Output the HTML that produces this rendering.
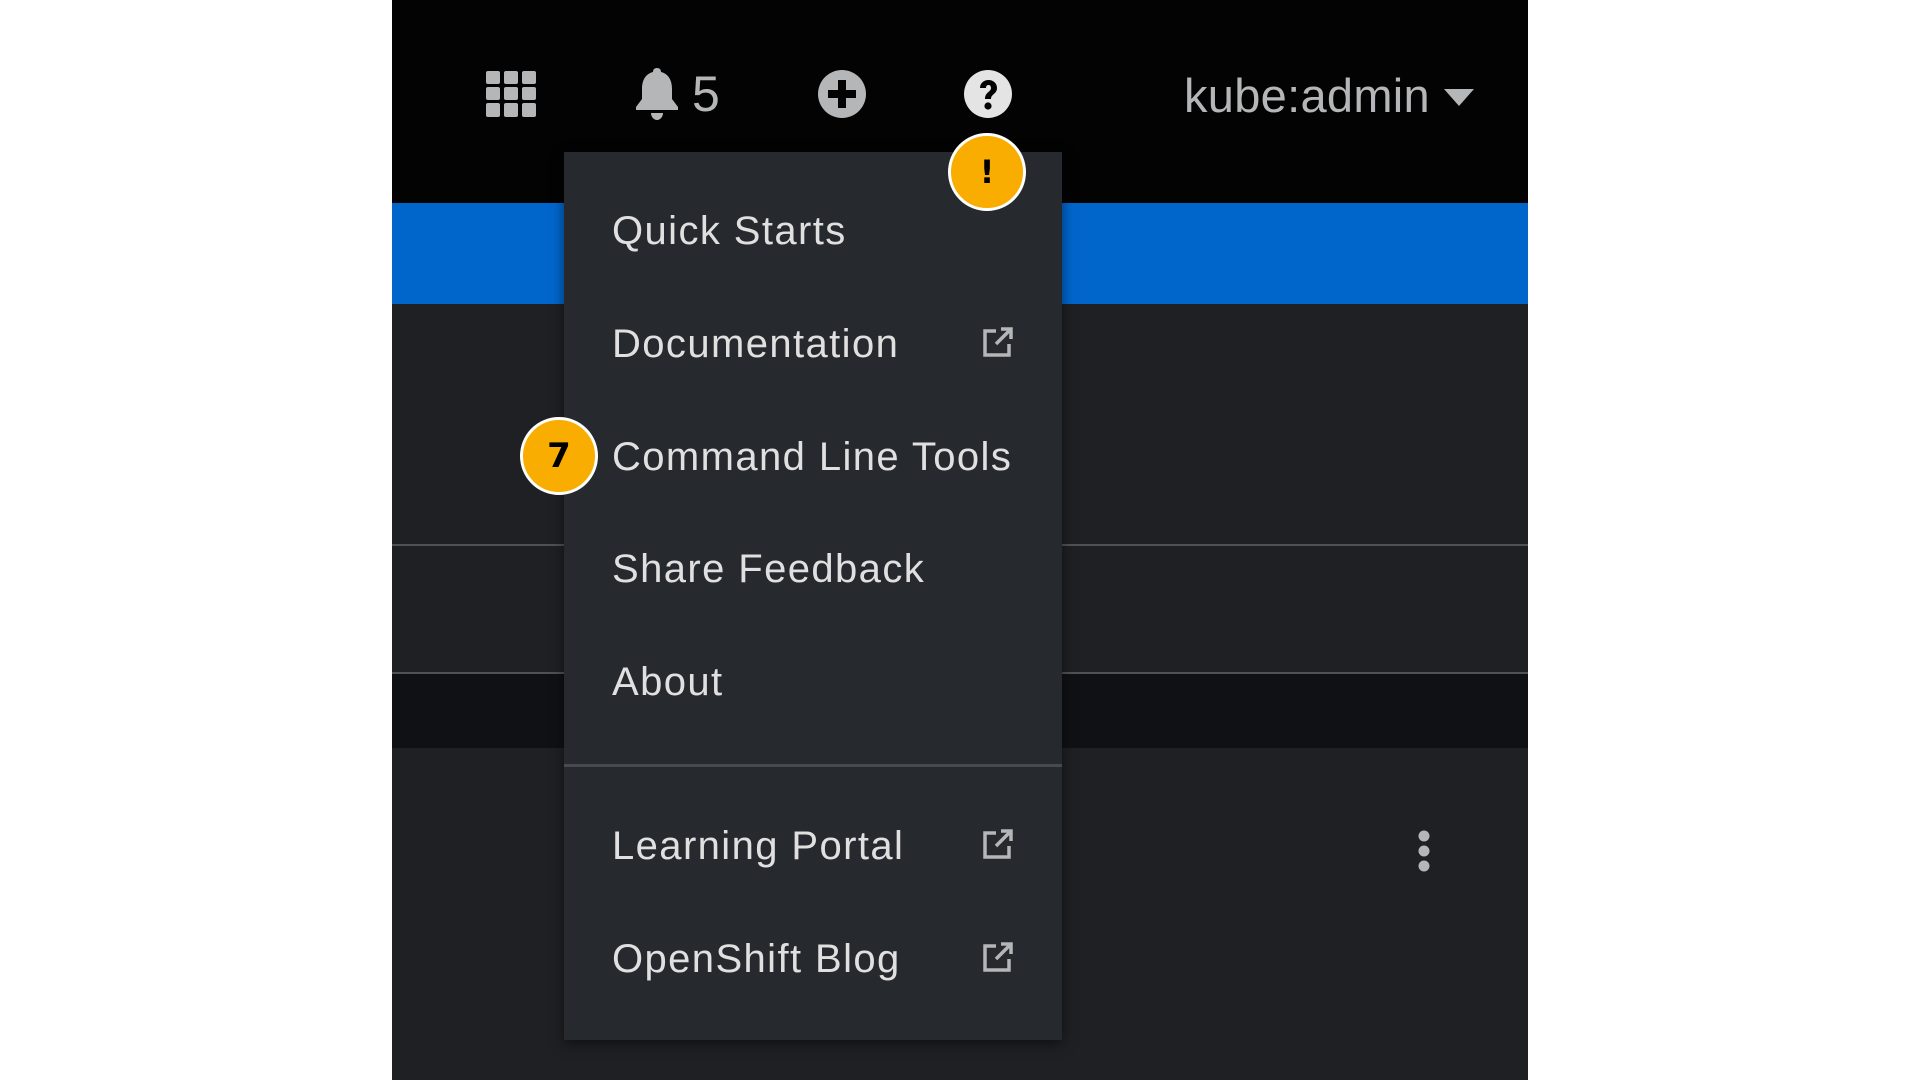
<!DOCTYPE html>
<html><head><style>
html,body{margin:0;padding:0;width:1920px;height:1080px;background:#fff;overflow:hidden;font-family:"Liberation Sans",sans-serif}
.p{position:absolute}
.it{position:absolute;left:612px;color:#e0e0e0;font-size:40px;letter-spacing:1.4px;line-height:42px;transform:translateY(-50%)}
.ext{position:absolute;left:982px;width:32px;height:32px;transform:translateY(-50%)}
.badge{position:absolute;border-radius:50%;background:#f9ad00;border:3px solid #fff;box-sizing:border-box;color:#000;font-weight:bold;font-family:"DejaVu Sans","Liberation Sans",sans-serif;display:flex;align-items:center;justify-content:center}
</style></head><body>
<div class="p" style="left:392px;top:0;width:1136px;height:1080px;background:#1f2023"></div>
<div class="p" style="left:392px;top:0;width:1136px;height:203px;background:#030303"></div>
<div class="p" style="left:392px;top:203px;width:1136px;height:101px;background:#0066cc"></div>
<div class="p" style="left:392px;top:544px;width:1136px;height:2px;background:#4f5255"></div>
<div class="p" style="left:392px;top:672px;width:1136px;height:2px;background:#4f5255"></div>
<div class="p" style="left:392px;top:674px;width:1136px;height:74px;background:#0f1114"></div>
<svg class="p" style="left:486px;top:71px" width="50" height="46" viewBox="0 0 50 46" fill="#b4b6b8">
<rect x="0" y="0" width="14" height="13" rx="2"/><rect x="18" y="0" width="14" height="13" rx="2"/><rect x="36" y="0" width="14" height="13" rx="2"/>
<rect x="0" y="16" width="14" height="13" rx="2"/><rect x="18" y="16" width="14" height="13" rx="2"/><rect x="36" y="16" width="14" height="13" rx="2"/>
<rect x="0" y="32" width="14" height="14" rx="2"/><rect x="18" y="32" width="14" height="14" rx="2"/><rect x="36" y="32" width="14" height="14" rx="2"/></svg>
<svg class="p" style="left:634px;top:68px" width="46" height="52" viewBox="0 0 46 52" fill="#b4b6b8">
<path d="M23 0c3 0 4 2 4 4 8 2 11 9 11 17v10l6 8v3H2v-3l6-8V21c0-8 3-15 11-17 0-2 1-4 4-4z"/><path d="M17 45h12c0 4-3 7-6 7s-6-3-6-7z"/></svg>
<div class="p" style="left:692px;top:66px;color:#b4b6b8;font-size:50px;line-height:56px">5</div>
<svg class="p" style="left:818px;top:70px" width="48" height="48" viewBox="0 0 48 48"><circle cx="24" cy="24" r="24" fill="#b4b6b8"/><path d="M20 10h8v10h10v8H28v10h-8V28H10v-8h10z" fill="#030303"/></svg>
<svg class="p" style="left:964px;top:70px" width="48" height="48" viewBox="0 0 48 48"><circle cx="24" cy="24" r="24" fill="#e4e4e4"/><path d="M16 18c0-5 4-8 8.5-8S33 13 33 18c0 6-6 6-6 11h-6c0-7 6-7 6-11 0-2-1-3-2.5-3S22 16 22 18z" fill="#030303"/><circle cx="24" cy="36" r="3.6" fill="#030303"/></svg>
<div class="p" style="left:1184px;top:68px;color:#b4b6b8;font-size:47px;line-height:56px;letter-spacing:0.3px">kube:admin</div>
<svg class="p" style="left:1444px;top:89px" width="30" height="18" viewBox="0 0 30 18"><path d="M0 0h30L15 17z" fill="#b4b6b8"/></svg>
<svg class="p" style="left:1418px;top:830px" width="12" height="42" viewBox="0 0 12 42" fill="#b4b6b8"><circle cx="6" cy="6" r="5.5"/><circle cx="6" cy="21" r="5.5"/><circle cx="6" cy="36" r="5.5"/></svg>
<div class="p" style="left:564px;top:152px;width:498px;height:888px;background:#26292d;box-shadow:0 4px 12px rgba(0,0,0,.5)"></div>
<div class="p" style="left:564px;top:764px;width:498px;height:3px;background:#474a4e"></div>
<div class="it" style="top:231px">Quick Starts</div>
<div class="it" style="top:344px">Documentation</div>
<div class="it" style="top:457px">Command Line Tools</div>
<div class="it" style="top:569px">Share Feedback</div>
<div class="it" style="top:682px">About</div>
<div class="it" style="top:846px">Learning Portal</div>
<div class="it" style="top:959px">OpenShift Blog</div>
<svg class="ext" style="top:342px" viewBox="0 0 32 32" fill="none" stroke="#b4b6b8" stroke-width="3.5"><path d="M14 5H3v24h24V18"/><path d="M14 18L29 3M19 3h10v10"/></svg>
<svg class="ext" style="top:844px" viewBox="0 0 32 32" fill="none" stroke="#b4b6b8" stroke-width="3.5"><path d="M14 5H3v24h24V18"/><path d="M14 18L29 3M19 3h10v10"/></svg>
<svg class="ext" style="top:957px" viewBox="0 0 32 32" fill="none" stroke="#b4b6b8" stroke-width="3.5"><path d="M14 5H3v24h24V18"/><path d="M14 18L29 3M19 3h10v10"/></svg>
<div class="badge" style="left:948px;top:133px;width:78px;height:78px;font-size:32px">!</div>
<div class="badge" style="left:520px;top:417px;width:78px;height:78px;font-size:34px">7</div>
</body></html>
